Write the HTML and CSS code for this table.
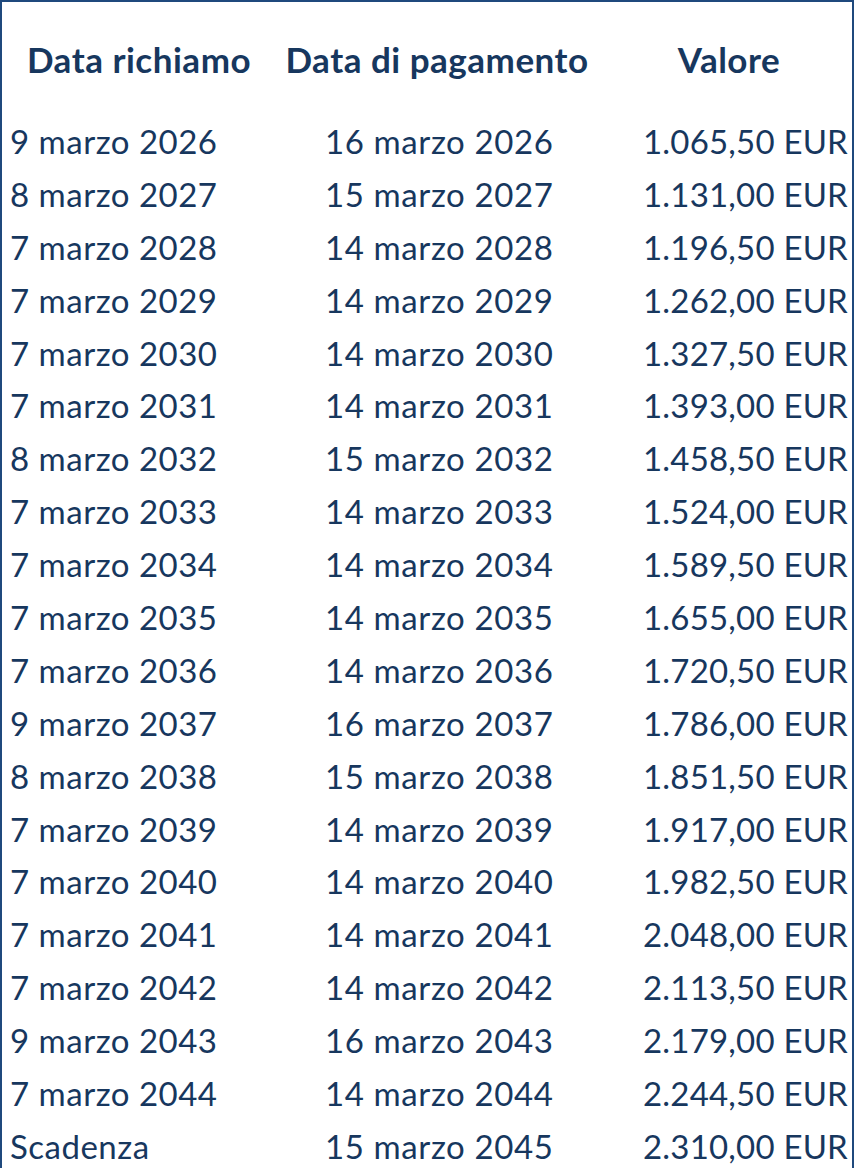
FILE: index.html
```html
<!DOCTYPE html>
<html lang="it">
<head>
<meta charset="utf-8">
<title>Richiami</title>
<link rel="stylesheet" href="styles.css">
</head>
<body>
<div class="sheet">
  <div class="head">
    <div class="hc">Data richiamo</div>
    <div class="hc hc-mid">Data di pagamento</div>
    <div class="hc">Valore</div>
  </div>
  <div class="rows">
    <div class="row"><div class="c1">9 marzo 2026</div><div class="c2">16 marzo 2026</div><div class="c3">1.065,50 EUR</div></div>
    <div class="row"><div class="c1">8 marzo 2027</div><div class="c2">15 marzo 2027</div><div class="c3">1.131,00 EUR</div></div>
    <div class="row"><div class="c1">7 marzo 2028</div><div class="c2">14 marzo 2028</div><div class="c3">1.196,50 EUR</div></div>
    <div class="row"><div class="c1">7 marzo 2029</div><div class="c2">14 marzo 2029</div><div class="c3">1.262,00 EUR</div></div>
    <div class="row"><div class="c1">7 marzo 2030</div><div class="c2">14 marzo 2030</div><div class="c3">1.327,50 EUR</div></div>
    <div class="row"><div class="c1">7 marzo 2031</div><div class="c2">14 marzo 2031</div><div class="c3">1.393,00 EUR</div></div>
    <div class="row"><div class="c1">8 marzo 2032</div><div class="c2">15 marzo 2032</div><div class="c3">1.458,50 EUR</div></div>
    <div class="row"><div class="c1">7 marzo 2033</div><div class="c2">14 marzo 2033</div><div class="c3">1.524,00 EUR</div></div>
    <div class="row"><div class="c1">7 marzo 2034</div><div class="c2">14 marzo 2034</div><div class="c3">1.589,50 EUR</div></div>
    <div class="row"><div class="c1">7 marzo 2035</div><div class="c2">14 marzo 2035</div><div class="c3">1.655,00 EUR</div></div>
    <div class="row"><div class="c1">7 marzo 2036</div><div class="c2">14 marzo 2036</div><div class="c3">1.720,50 EUR</div></div>
    <div class="row"><div class="c1">9 marzo 2037</div><div class="c2">16 marzo 2037</div><div class="c3">1.786,00 EUR</div></div>
    <div class="row"><div class="c1">8 marzo 2038</div><div class="c2">15 marzo 2038</div><div class="c3">1.851,50 EUR</div></div>
    <div class="row"><div class="c1">7 marzo 2039</div><div class="c2">14 marzo 2039</div><div class="c3">1.917,00 EUR</div></div>
    <div class="row"><div class="c1">7 marzo 2040</div><div class="c2">14 marzo 2040</div><div class="c3">1.982,50 EUR</div></div>
    <div class="row"><div class="c1">7 marzo 2041</div><div class="c2">14 marzo 2041</div><div class="c3">2.048,00 EUR</div></div>
    <div class="row"><div class="c1">7 marzo 2042</div><div class="c2">14 marzo 2042</div><div class="c3">2.113,50 EUR</div></div>
    <div class="row"><div class="c1">9 marzo 2043</div><div class="c2">16 marzo 2043</div><div class="c3">2.179,00 EUR</div></div>
    <div class="row"><div class="c1">7 marzo 2044</div><div class="c2">14 marzo 2044</div><div class="c3">2.244,50 EUR</div></div>
    <div class="row"><div class="c1">Scadenza</div><div class="c2">15 marzo 2045</div><div class="c3">2.310,00 EUR</div></div>
  </div>
</div>
</body>
</html>
```
FILE: styles.css
```css
html, body {
  margin: 0;
  padding: 0;
  background: #ffffff;
}
body {
  width: 856px;
  height: 1168px;
  overflow: hidden;
  font-family: Lato, "Open Sans", sans-serif;
  color: #17375e;
}
.sheet {
  box-sizing: border-box;
  width: 854px;
  height: 1180px;
  border: 2px solid #1f497d;
  border-bottom: none;
}
.head {
  display: grid;
  grid-template-columns: 274px 330px 246px;
  height: 113px;
  align-items: center;
  font-weight: 700;
  font-size: 35px;
  letter-spacing: 0.5px;
}
.hc {
  text-align: center;
  padding-bottom: 0;
}
.hc-mid {
  padding-right: 8px;
}
.rows {
  display: flex;
  flex-direction: column;
}
.row {
  display: grid;
  grid-template-columns: 274px 330px 246px;
  height: 52.9px;
  align-items: center;
  font-size: 33px;
  line-height: 1;
  letter-spacing: 0.5px;
}
.c1 {
  padding-left: 8px;
}
.c2 {
  padding-left: 49px;
  letter-spacing: 0.6px;
}
.c3 {
  text-align: right;
  padding-right: 4px;
  letter-spacing: 0.2px;
}
```
